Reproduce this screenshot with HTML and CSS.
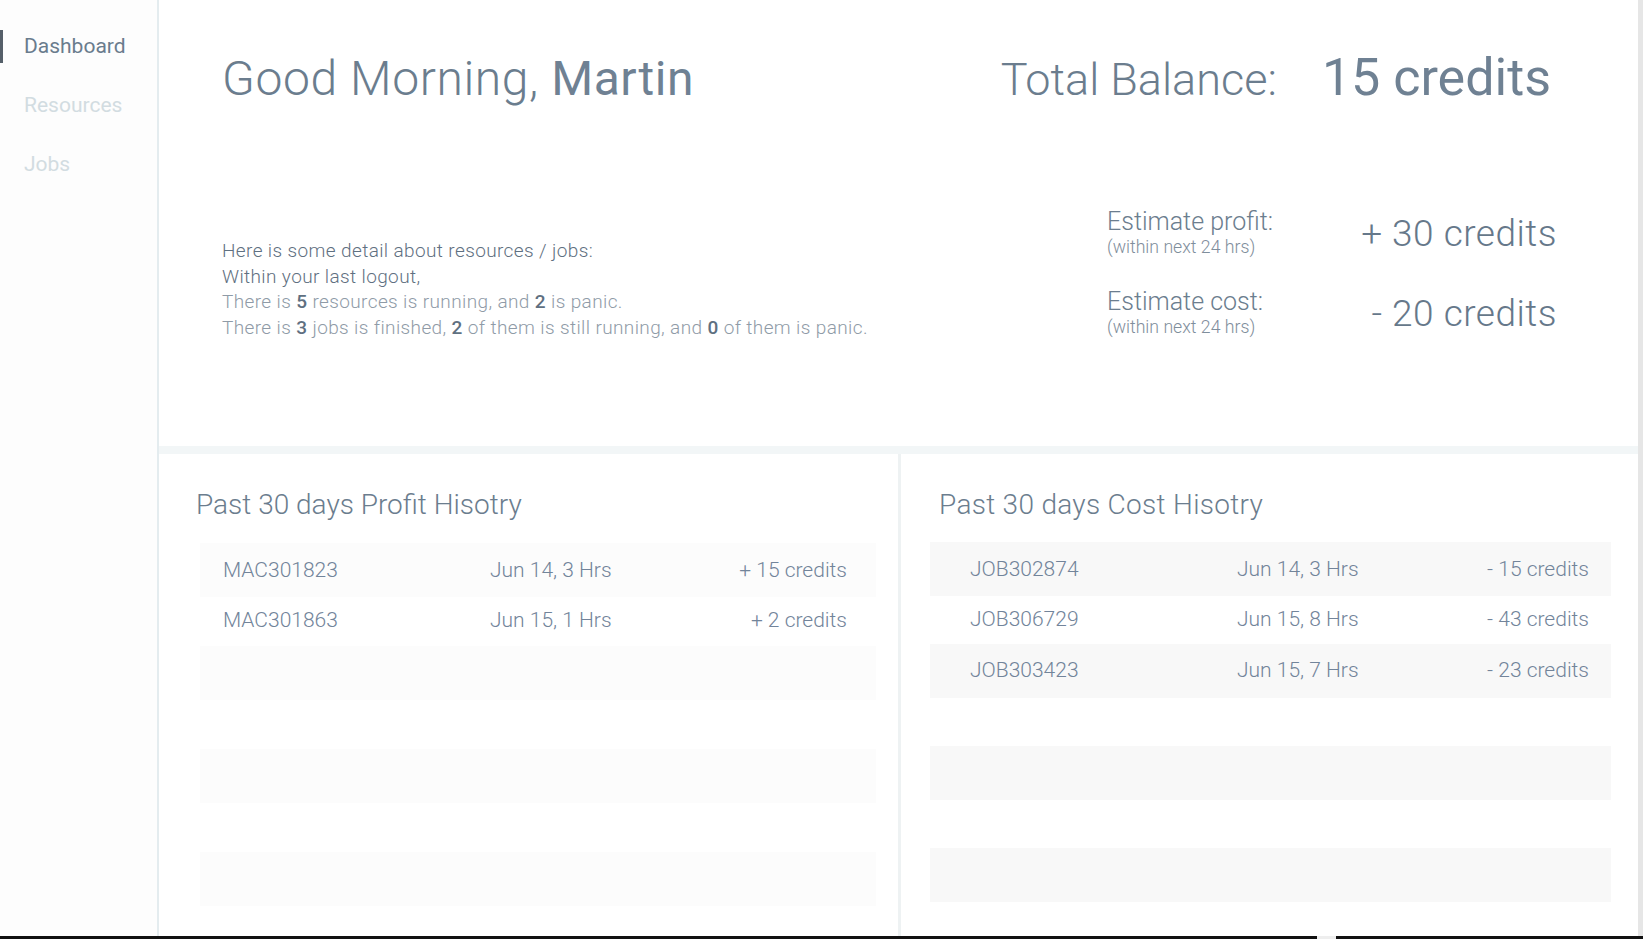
FILE: index.html
```html
<!DOCTYPE html>
<html lang="en">
<head>
<meta charset="utf-8">
<title>Dashboard</title>
<link rel="stylesheet" href="styles.css">
</head>
<body>
<div class="app">
  <nav class="sidebar">
    <a class="nav-item is-active">Dashboard</a>
    <a class="nav-item">Resources</a>
    <a class="nav-item">Jobs</a>
  </nav>
  <main class="main">
    <section class="hero">
      <div class="hero-top">
        <h1 class="greeting">Good Morning, <span class="greeting-name">Martin</span></h1>
        <div class="balance">
          <span class="balance-label">Total Balance:</span>
          <span class="balance-value">15 credits</span>
        </div>
      </div>
      <div class="hero-bottom">
        <div class="detail">
          <p class="detail-line detail-line--strong">Here is some detail about resources / jobs:</p>
          <p class="detail-line detail-line--strong">Within your last logout,</p>
          <p class="detail-line">There is <b>5</b> resources is running, and <b>2</b> is panic.</p>
          <p class="detail-line">There is <b>3</b> jobs is finished, <b>2</b> of them is still running, and <b>0</b> of them is panic.</p>
        </div>
        <div class="estimates">
          <div class="estimate">
            <div class="estimate-label">
              <div class="estimate-title">Estimate profit:</div>
              <div class="estimate-sub">(within next 24 hrs)</div>
            </div>
            <div class="estimate-value">+ 30 credits</div>
          </div>
          <div class="estimate">
            <div class="estimate-label">
              <div class="estimate-title">Estimate cost:</div>
              <div class="estimate-sub">(within next 24 hrs)</div>
            </div>
            <div class="estimate-value">- 20 credits</div>
          </div>
        </div>
      </div>
    </section>
    <div class="separator"></div>
    <section class="panels">
      <div class="panel panel--profit">
        <h2 class="panel-title">Past 30 days Profit Hisotry</h2>
        <div class="table">
          <div class="row row--first"><span>MAC301823</span><span>Jun 14, 3 Hrs</span><span class="amount">+ 15 credits</span></div>
          <div class="row"><span>MAC301863</span><span>Jun 15, 1 Hrs</span><span class="amount">+ 2 credits</span></div>
          <div class="row"></div>
          <div class="row"></div>
          <div class="row"></div>
          <div class="row"></div>
          <div class="row"></div>
        </div>
      </div>
      <div class="panel panel--cost">
        <h2 class="panel-title">Past 30 days Cost Hisotry</h2>
        <div class="table">
          <div class="row"><span>JOB302874</span><span>Jun 14, 3 Hrs</span><span class="amount">- 15 credits</span></div>
          <div class="row"><span>JOB306729</span><span>Jun 15, 8 Hrs</span><span class="amount">- 43 credits</span></div>
          <div class="row"><span>JOB303423</span><span>Jun 15, 7 Hrs</span><span class="amount">- 23 credits</span></div>
          <div class="row"></div>
          <div class="row"></div>
          <div class="row"></div>
          <div class="row"></div>
        </div>
      </div>
    </section>
  </main>
  <div class="scroll-track"></div>
</div>
<div class="bottom-bar"><span class="bottom-gap"></span></div>
</body>
</html>
```

FILE: styles.css
```css
* { box-sizing: border-box; }

html, body {
  margin: 0;
  padding: 0;
}

body {
  width: 1643px;
  height: 939px;
  overflow: hidden;
  background: #ffffff;
  font-family: Roboto, "Liberation Sans", sans-serif;
  font-weight: 300;
  color: #6b7d8e;
  display: flex;
  flex-direction: column;
}

.app {
  display: flex;
  height: 936px;
}

/* Sidebar */
.sidebar {
  width: 159px;
  flex: none;
  background: #fdfdfd;
  border-right: 2px solid #e4ecef;
  display: flex;
  flex-direction: column;
  gap: 26px;
  padding-top: 30px;
}

.nav-item {
  display: block;
  height: 33px;
  line-height: 33px;
  padding-left: 24px;
  font-size: 21px;
  font-weight: 400;
  color: #d2dce1;
}

.nav-item.is-active {
  color: #6a7c8d;
  border-left: 3px solid #555f69;
  padding-left: 21px;
}

/* Main */
.main {
  flex: 1;
  display: flex;
  flex-direction: column;
  min-width: 0;
}

.hero {
  height: 446px;
  flex: none;
  padding: 47px 87px 0 63px;
}

.hero-top {
  display: flex;
  justify-content: space-between;
  align-items: baseline;
  height: 56px;
}

.greeting {
  margin: 0;
  font-size: 48px;
  line-height: 56px;
  font-weight: 300;
  letter-spacing: 0.6px;
  color: #6b7d8e;
}

.greeting-name {
  font-weight: 400;
  color: #6f8193;
}

.balance {
  display: flex;
  align-items: baseline;
  gap: 45px;
}

.balance-label {
  font-size: 45px;
  font-weight: 300;
  color: #6b7d8e;
}

.balance-value {
  font-size: 52px;
  font-weight: 400;
  color: #6f8193;
}

.hero-bottom {
  display: flex;
  justify-content: space-between;
  align-items: flex-start;
  margin-top: 106px;
}

.detail {
  margin-top: 29px;
  font-size: 19px;
  line-height: 25.5px;
  letter-spacing: 0.38px;
}

.detail-line {
  margin: 0;
  color: #8f9ba7;
}

.detail-line--strong {
  color: #5f7081;
}

.detail-line b {
  font-weight: 500;
  color: #5f7081;
}

.estimates {
  width: 452px;
  margin-right: -6px;
  display: flex;
  flex-direction: column;
  gap: 31px;
}

.estimate {
  display: flex;
  justify-content: space-between;
  align-items: center;
}

.estimate-label {
  padding-left: 2px;
}

.estimate-title {
  font-size: 25px;
  line-height: 26px;
  color: #6b7d8e;
}

.estimate-sub {
  font-size: 17.7px;
  line-height: 22px;
  margin-top: 1px;
  color: #7f8e9c;
}

.estimate-value {
  font-size: 37px;
  letter-spacing: 0.5px;
  color: #66788a;
  font-weight: 300;
}

.separator {
  height: 8px;
  flex: none;
  background: #f2f6f7;
}

/* Panels */
.panels {
  flex: 1;
  display: flex;
}

.panel {
  padding-top: 35px;
}

.panel--profit {
  width: 739px;
  flex: none;
}

.panel--cost {
  flex: 1;
  border-left: 3px solid #eef2f3;
}

.panel-title {
  margin: 0;
  font-size: 28px;
  line-height: 31px;
  font-weight: 300;
  color: #6b7d8e;
}

.panel--profit .panel-title { padding-left: 37px; }
.panel--cost .panel-title { padding-left: 38px; letter-spacing: 0.3px; }

.panel--profit .table { margin: 23px 22px 0 41px; }
.panel--cost .table { margin: 22px 27px 0 29px; }

.row {
  display: grid;
  grid-template-columns: 267px 1fr auto;
  align-items: center;
  font-size: 21px;
  color: #72849a;
}

.panel--profit .row { padding: 0 29px 0 23px; }
.panel--cost .row { padding: 0 22px 0 40px; }

.panel--profit .row:nth-child(odd) { height: 54px; background: #fcfcfc; }
.panel--profit .row:nth-child(even) { height: 49px; padding-bottom: 3px; }
.panel--profit .row--first { background: #fafafa; }

.panel--cost .row:nth-child(odd) { height: 54px; background: #f8f8f8; padding-bottom: 3px; }
.panel--cost .row:nth-child(even) { height: 48px; padding-bottom: 3px; }
.panel--cost .row:first-child { padding-bottom: 0; }

.amount {
  text-align: right;
}

.scroll-track {
  width: 5px;
  flex: none;
  background: #e6e6e6;
}

.bottom-bar {
  height: 3px;
  background: #111111;
  display: flex;
}

.bottom-gap {
  margin-left: 1317px;
  width: 19px;
  background: #eeeeee;
}
```
